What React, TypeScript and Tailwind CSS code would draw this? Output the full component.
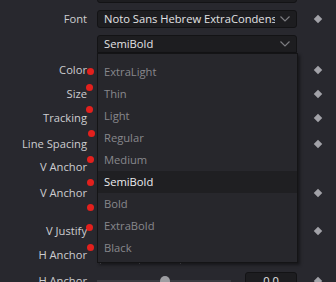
import React from "react";

const Chevron = () => (
  <svg width="10" height="6" viewBox="0 0 10 6" className="shrink-0">
    <path d="M0.5 0.5 L5 5 L9.5 0.5" fill="none" stroke="#7c7c80" strokeWidth="1.2" />
  </svg>
);

const Diamond = () => <div className="w-[6px] h-[6px] rotate-45 bg-[#a2a2a8]" />;

type Row = { label?: string; mt: number; diamond: boolean; kind?: "font" | "weight" | "slider" };

const rows: Row[] = [
  { label: "Font", mt: 10, diamond: true, kind: "font" },
  { mt: 7, diamond: false, kind: "weight" },
  { label: "Color", mt: 8, diamond: true },
  { label: "Size", mt: 6, diamond: true },
  { label: "Tracking", mt: 6, diamond: true },
  { label: "Line Spacing", mt: 8, diamond: true },
  { label: "V Anchor", mt: 5, diamond: false },
  { label: "V Anchor", mt: 8, diamond: true },
  { label: "V Justify", mt: 20, diamond: true },
  { label: "H Anchor", mt: 6, diamond: false },
  { label: "H Anchor", mt: 8, diamond: true, kind: "slider" },
];

const items = ["ExtraLight", "Thin", "Light", "Regular", "Medium", "SemiBold", "Bold", "ExtraBold", "Black"];

const dots = [
  [90, 71],
  [89, 87],
  [89, 109],
  [91, 133],
  [90, 159],
  [90, 182],
  [90, 207],
  [89, 227],
  [90, 247],
];

export default function App() {
  return (
    <div
      className="relative w-[336px] h-[282px] overflow-hidden bg-[#28282e] text-[11.2px]"
      style={{ fontFamily: '"Open Sans", "Noto Sans", sans-serif' }}
    >
      {/* top remnant box */}
      <div className="absolute left-[97px] top-[-10px] w-[200px] h-[13px] rounded-[3px] bg-[#1d1d20] border border-[#131315]" />

      <div className="flex flex-col">
        {rows.map((r, i) => (
          <div key={i} className="flex items-center h-[18px] shrink-0" style={{ marginTop: r.mt }}>
            <div className="w-[87px] text-right text-[#cdcdd0] leading-none whitespace-nowrap">{r.label ?? ""}</div>
            <div className="ml-[10px] w-[200px] h-[18px]">
              {r.kind === "font" && (
                <div className="h-full rounded-[3px] bg-[#1d1d20] border border-[#131315] flex items-center pl-[6px] pr-[6px] gap-[5px]">
                  <span className="flex-1 overflow-hidden whitespace-nowrap text-[#e2e2e4] leading-none">
                    Noto Sans Hebrew ExtraCondensed
                  </span>
                  <Chevron />
                </div>
              )}
              {r.kind === "weight" && (
                <div className="h-full rounded-t-[3px] bg-[#1d1d20] border border-[#131315] flex items-center pl-[6px] pr-[6px]">
                  <span className="flex-1 text-[#e2e2e4] leading-none">SemiBold</span>
                  <Chevron />
                </div>
              )}
              {r.kind === "slider" && (
                <div className="flex items-center h-full">
                  <div className="relative w-[134px] h-[2px] bg-[#3a3a40]">
                    <div className="absolute left-[63px] top-[-4px] w-[10px] h-[10px] rounded-full bg-[#9c9ca0]" />
                  </div>
                  <div className="ml-auto w-[52px] h-full rounded-[3px] bg-[#1d1d20] border border-[#131315] flex items-center justify-center text-[#e2e2e4]">
                    0.0
                  </div>
                </div>
              )}
            </div>
            <div className="flex-1 flex justify-center pl-[3px]">{r.diamond && <Diamond />}</div>
          </div>
        ))}
      </div>

      {/* keyframe dots */}
      {dots.map(([x, y], i) => (
        <div
          key={i}
          className="absolute w-[7px] h-[7px] rounded-full bg-[#e3201d]"
          style={{ left: x - 3.5, top: y - 3.5 }}
        />
      ))}

      {/* faint ticks */}
      <div className="absolute left-[100px] top-[263px] w-[1px] h-[1px] bg-[#55555a]" />
      <div className="absolute left-[139px] top-[263px] w-[1px] h-[1px] bg-[#55555a]" />
      <div className="absolute left-[180px] top-[263px] w-[1px] h-[1px] bg-[#55555a]" />

      {/* dropdown list overlay */}
      <div className="absolute left-[97px] top-[53px] w-[201px] h-[210px] bg-[#27272c] border border-[#141416] shadow-[2px_2px_3px_rgba(0,0,0,0.45)] pt-[7px]">
        {items.map((it) => (
          <div
            key={it}
            className={`h-[22px] flex items-center pl-[6px] leading-none ${
              it === "SemiBold" ? "bg-[#1f1f22] text-[#ececee]" : "text-[#88888c]"
            }`}
          >
            {it}
          </div>
        ))}
      </div>
    </div>
  );
}
